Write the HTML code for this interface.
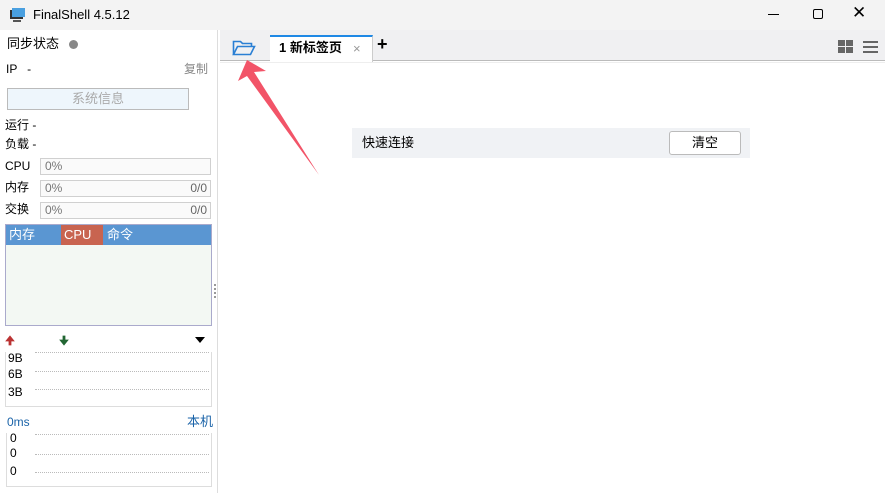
<!DOCTYPE html>
<html><head><meta charset="utf-8"><style>
*{margin:0;padding:0;box-sizing:border-box}
body{width:885px;height:493px;overflow:hidden;background:#fff;font-family:"Liberation Sans","Noto Sans CJK SC",sans-serif;font-size:12px;line-height:15px;color:#000;position:relative}
.a{position:absolute}
.bar{border:1px solid #d0d0d0;background:#fafafa;height:17px;color:#777;font-size:12px;line-height:15px;padding-left:4px}
.dots{border-top:1px dotted #bbb;height:0}
</style></head><body>
<div class="a" style="left:0;top:0;width:885px;height:30px;background:#f3f3f3"></div>
<svg class="a" style="left:9px;top:7px" width="17" height="16"><rect x="1" y="3" width="13" height="9" fill="#333"/><rect x="3" y="1" width="13" height="9" fill="#4aa0e0"/><rect x="4" y="13" width="8" height="2" fill="#555"/></svg>
<div class="a" style="left:33px;top:7px;font-size:13px">FinalShell 4.5.12</div>
<div class="a" style="left:768px;top:14px;width:11px;height:1px;background:#000"></div>
<div class="a" style="left:813px;top:9px;width:10px;height:10px;border:1px solid #000;border-radius:2px"></div>
<div class="a" style="left:852px;top:5px;font-size:17px">✕</div>
<!-- left panel -->
<div class="a" style="left:0;top:30px;width:218px;height:463px;background:#fff;border-right:1px solid #ddd"></div>
<div class="a" style="left:7px;top:36px;font-size:13px">同步状态</div>
<div class="a" style="left:69px;top:40px;width:9px;height:9px;border-radius:50%;background:#888"></div>
<div class="a" style="left:6px;top:62px">IP &nbsp; -</div>
<div class="a" style="left:184px;top:62px;color:#888">复制</div>
<div class="a" style="left:7px;top:88px;width:182px;height:22px;border:1px solid #bbb;background:#eef6fc;color:#aaa;text-align:center;line-height:20px;font-size:13px">系统信息</div>
<div class="a" style="left:5px;top:118px">运行 -</div>
<div class="a" style="left:5px;top:137px">负载 -</div>
<div class="a" style="left:5px;top:159px">CPU</div><div class="a bar" style="left:40px;top:158px;width:171px">0%</div>
<div class="a" style="left:5px;top:180px">内存</div><div class="a bar" style="left:40px;top:180px;width:171px">0%<span style="float:right;padding-right:3px;color:#666">0/0</span></div>
<div class="a" style="left:5px;top:202px">交换</div><div class="a bar" style="left:40px;top:202px;width:171px">0%<span style="float:right;padding-right:3px;color:#666">0/0</span></div>
<div class="a" style="left:5px;top:224px;width:207px;height:102px;border:1px solid #aac;background:#f3f8f3"></div>
<div class="a" style="left:6px;top:225px;width:205px;height:20px;background:#5a96d2"></div>
<div class="a" style="left:61px;top:225px;width:42px;height:20px;background:#c86450"></div>
<div class="a" style="left:9px;top:227px;color:#fff;font-size:13px">内存</div>
<div class="a" style="left:64px;top:227px;color:#fff;font-size:13px">CPU</div>
<div class="a" style="left:107px;top:227px;color:#fff;font-size:13px">命令</div>
<div class="a" style="left:214px;top:284px;width:3px;height:14px;border-left:2px dotted #999"></div>
<svg class="a" style="left:5px;top:335px" width="12" height="11"><path d="M5 1L1 6h3v4h2V6h3z" fill="#b33" stroke="#b33" stroke-width="0.8"/></svg>
<svg class="a" style="left:59px;top:335px" width="12" height="11"><path d="M5 10L1 5h3V1h2v4h3z" fill="#263" stroke="#263" stroke-width="0.8"/></svg>
<div class="a" style="left:195px;top:337px;width:0;height:0;border-left:5px solid transparent;border-right:5px solid transparent;border-top:6px solid #000"></div>
<div class="a" style="left:5px;top:352px;width:207px;height:55px;border:1px solid #ddd;border-top:none"></div>
<div class="a" style="left:8px;top:351px">9B</div><div class="a dots" style="left:35px;top:352px;width:174px"></div>
<div class="a" style="left:8px;top:367px">6B</div><div class="a dots" style="left:35px;top:371px;width:174px"></div>
<div class="a" style="left:8px;top:385px">3B</div><div class="a dots" style="left:35px;top:389px;width:174px"></div>
<div class="a" style="left:7px;top:415px;color:#1a63a8">0ms</div>
<div class="a" style="left:187px;top:414px;color:#1a63a8;font-size:13px">本机</div>
<div class="a" style="left:6px;top:433px;width:206px;height:54px;border:1px solid #ddd;border-top:none"></div>
<div class="a" style="left:10px;top:431px">0</div><div class="a dots" style="left:35px;top:434px;width:174px"></div>
<div class="a" style="left:10px;top:446px">0</div><div class="a dots" style="left:35px;top:454px;width:174px"></div>
<div class="a" style="left:10px;top:464px">0</div><div class="a dots" style="left:35px;top:472px;width:174px"></div>
<!-- tab bar -->
<div class="a" style="left:220px;top:30px;width:665px;height:31px;background:#f0f0f2;border-bottom:1px solid #bbb"></div>
<div class="a" style="left:220px;top:62px;width:665px;height:1px;background:#eee"></div>
<svg class="a" style="left:232px;top:39px" width="24" height="18"><path d="M1.5 15.5V2.5h7l2 2h9v3" fill="none" stroke="#2a7fd4" stroke-width="1.6"/><path d="M1.5 15.5l4-8h17l-4 8z" fill="none" stroke="#2a7fd4" stroke-width="1.6"/></svg>
<div class="a" style="left:270px;top:35px;width:103px;height:27px;background:#fff;border-top:2px solid #1e88e5;border-right:1px solid #ccc"></div>
<div class="a" style="left:279px;top:40px;font-size:13px;font-weight:bold">1 新标签页</div>
<div class="a" style="left:353px;top:41px;color:#999;font-size:13px">×</div>
<div class="a" style="left:377px;top:37px;font-size:18px;font-weight:bold">+</div>
<svg class="a" style="left:838px;top:40px" width="40" height="14"><rect x="0" y="0" width="7" height="6" fill="#666"/><rect x="8" y="0" width="7" height="6" fill="#666"/><rect x="0" y="7" width="7" height="6" fill="#666"/><rect x="8" y="7" width="7" height="6" fill="#666"/><rect x="25" y="1" width="15" height="2" fill="#666"/><rect x="25" y="6" width="15" height="2" fill="#666"/><rect x="25" y="11" width="15" height="2" fill="#666"/></svg>
<!-- quick connect -->
<div class="a" style="left:352px;top:128px;width:398px;height:30px;background:#f0f2f5"></div>
<div class="a" style="left:362px;top:135px;font-size:13px">快速连接</div>
<div class="a" style="left:669px;top:131px;width:72px;height:24px;background:#fff;border:1px solid #bbb;border-radius:3px;text-align:center;line-height:22px;font-size:13px">清空</div>
<!-- arrow -->
<svg class="a" style="left:235px;top:55px" width="90" height="125"><path d="M12 5L3 26L12 21L84 120L19 17L31 16Z" fill="#f25468"/></svg>
</body></html>
